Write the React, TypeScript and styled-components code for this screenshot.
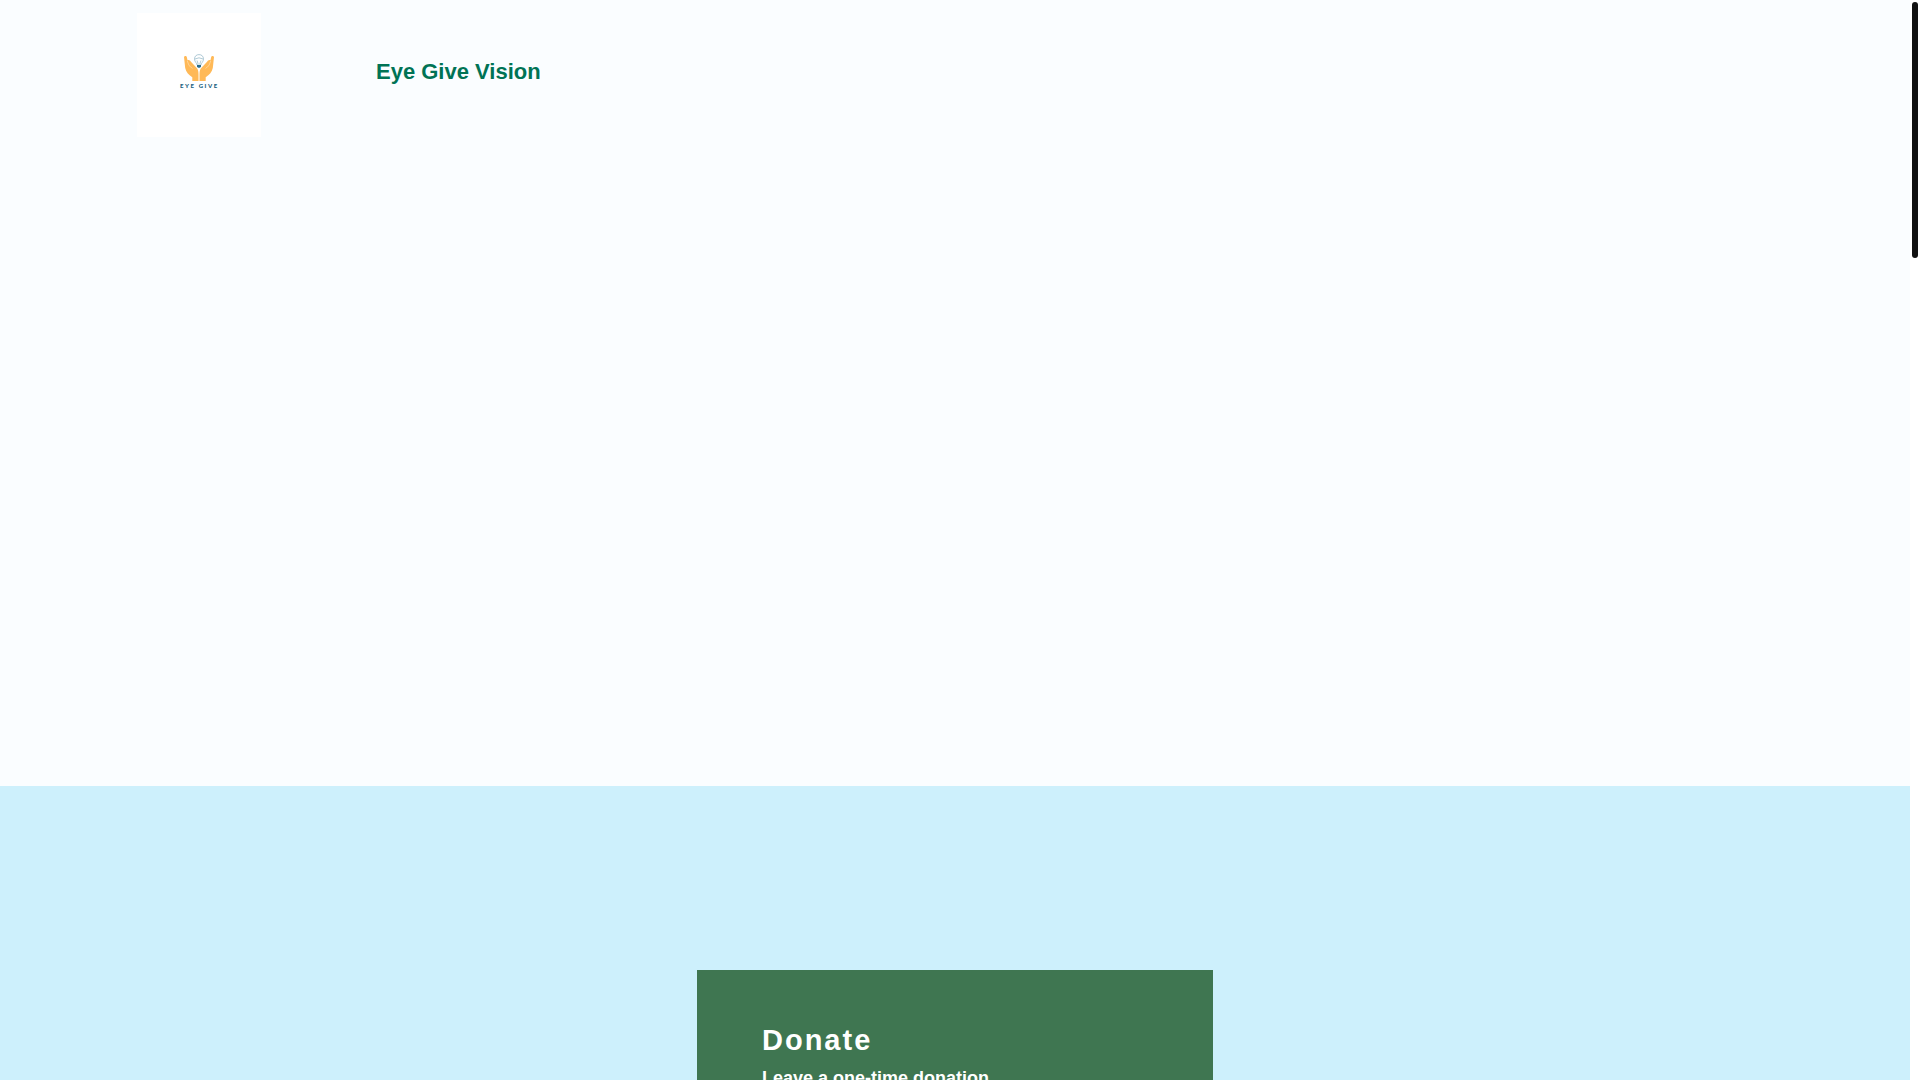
import React from "react";
import styled, { createGlobalStyle } from "styled-components";

const GlobalStyle = createGlobalStyle`
  * {
    box-sizing: border-box;
  }
  body {
    margin: 0;
    background: #ffffff;
    font-family: "Liberation Sans", Arial, sans-serif;
  }
`;

const Shell = styled.div`
  display: grid;
  grid-template-columns: minmax(0, 1fr) 10px;
  height: 100vh;
  overflow: hidden;
`;

const Page = styled.div`
  display: flex;
  flex-direction: column;
  min-height: 0;
  overflow: hidden;
`;

const Hero = styled.div`
  flex: none;
  min-height: 786px;
  background: #fafdff;
`;

const Header = styled.header`
  display: flex;
  align-items: flex-start;
  gap: 115px;
  padding: 13px 137px;
`;

const LogoLink = styled.a`
  display: block;
  width: 124px;
  height: 124px;
  background: #ffffff;
`;

const SiteTitle = styled.h1`
  margin: 0;
  padding-top: 45px;
  color: #007355;
  font-size: 22px;
  line-height: 28px;
  font-weight: 700;
`;

const DonateSection = styled.section`
  flex: 1 0 auto;
  display: flex;
  justify-content: center;
  align-items: flex-start;
  padding: 184px 24px;
  background: #cdf0fc;
`;

const Card = styled.div`
  width: 100%;
  max-width: 516px;
  min-height: 320px;
  padding: 52px 65px;
  background: #3f7651;
  color: #ffffff;
`;

const CardTitle = styled.h2`
  margin: 0;
  font-size: 29px;
  line-height: 36px;
  letter-spacing: 2px;
`;

const CardText = styled.p`
  margin: 8px 0 0;
  font-size: 18px;
  line-height: 24px;
  font-weight: 700;
`;

const ScrollTrack = styled.div`
  padding: 2px;
  background: #ffffff;
`;

const ScrollThumb = styled.div`
  height: 256px;
  border-radius: 3px;
  background: #111111;
`;

const hand =
  "M47 44C47.400 42.600 49.600 42.600 49.900 44.500L50.600 47.400C51.800 46.400 53.200 47.600 53.900 48.800L60 55.200C61.200 56.800 61.500 59 61.500 61.500V68H55.300V64.200C51.500 61.800 49 59 48.200 55Z";

function Logo() {
  return (
    <svg viewBox="0 0 124 124" width="124" height="124" role="img" aria-label="Eye Give">
      <g fill="#ffb957">
        <path d={hand} />
        <path d={hand} transform="matrix(-1 0 0 1 124 0)" />
      </g>
      <path
        d="M50.300 48L52 52.500L55.500 55.500M73.700 48L72 52.500L68.500 55.500"
        fill="none"
        stroke="#ffe3b8"
        strokeWidth="0.6"
      />
      <g fill="none" stroke="#8fb4c4" strokeWidth="0.7">
        <path d="M60 52C60 50 57.5 49 57.5 46C57.5 43.2 59.5 41.6 62 41.6S66.500 43.2 66.500 46C66.500 49 64 50 64 52Z" />
        <path d="M58 46Q62 43.600 66 46M60 47.500L61.200 51M64 47.500L62.800 51" />
      </g>
      <path d="M60 52H64V53.500L63 54.800H61L60 53.500Z" fill="#2a6d8b" />
      <text
        x="43"
        y="75"
        fill="#17607e"
        fontFamily="Lato, 'Liberation Sans', sans-serif"
        fontSize="6"
        fontWeight="900"
        letterSpacing="1.600"
      >
        EYE GIVE
      </text>
    </svg>
  );
}

export default function App() {
  return (
    <>
      <GlobalStyle />
      <Shell>
        <Page>
          <Hero>
            <Header>
              <LogoLink href="#home">
                <Logo />
              </LogoLink>
              <SiteTitle>Eye Give Vision</SiteTitle>
            </Header>
          </Hero>
          <DonateSection>
            <Card>
              <CardTitle>Donate</CardTitle>
              <CardText>Leave a one-time donation</CardText>
            </Card>
          </DonateSection>
        </Page>
        <ScrollTrack>
          <ScrollThumb />
        </ScrollTrack>
      </Shell>
    </>
  );
}
